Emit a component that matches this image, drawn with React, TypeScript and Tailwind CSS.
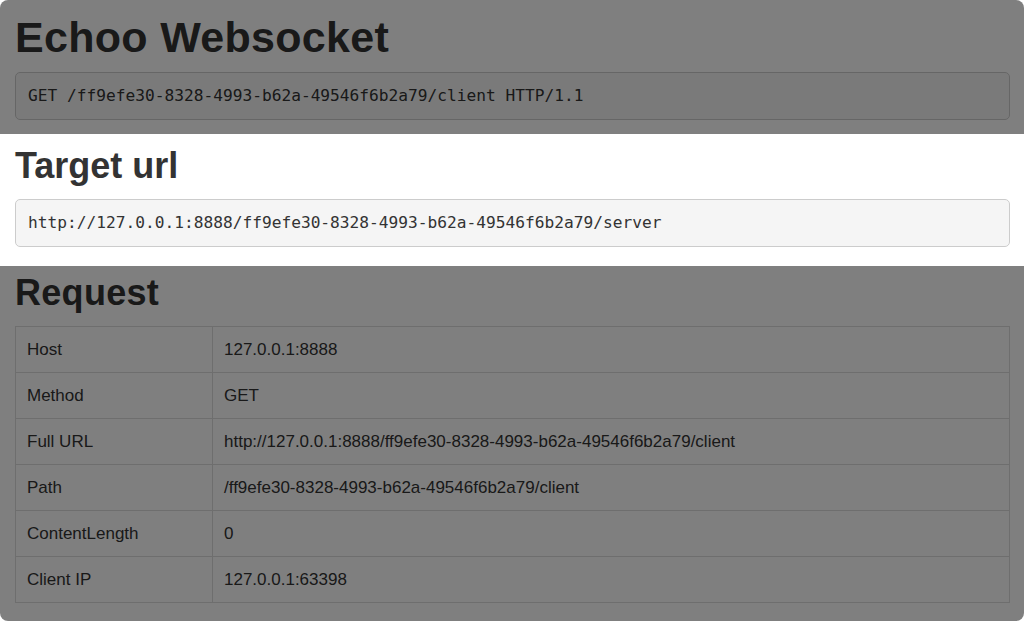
const requestRows: [string, string][] = [
  ['Host', '127.0.0.1:8888'],
  ['Method', 'GET'],
  ['Full URL', 'http://127.0.0.1:8888/ff9efe30-8328-4993-b62a-49546f6b2a79/client'],
  ['Path', '/ff9efe30-8328-4993-b62a-49546f6b2a79/client'],
  ['ContentLength', '0'],
  ['Client IP', '127.0.0.1:63398'],
]

const Pre = ({ children }: { children: string }) => (
  <pre className="h-[48px] rounded-[5px] border border-[#cccccc] bg-[#f5f5f5] px-[12px] font-['DejaVu_Sans_Mono',monospace] text-[16.2px] leading-[46px] text-[#333333]">
    {children}
  </pre>
)

// dims a block the way the screenshot tool greys out what isn't selected
const Dimmed = ({ children, className }: { children: React.ReactNode; className: string }) => (
  <section className={`relative ${className}`}>
    {children}
    <div className="absolute inset-0 bg-black/50" />
  </section>
)

export default function App() {
  return (
    <div className="h-[621px] w-[1024px] bg-white">
      <div className="h-full overflow-hidden rounded-[8px] bg-white font-['Liberation_Sans',Arial,sans-serif] text-[#333333]">
        <Dimmed className="h-[134px] pl-[15px] pr-[14px] pt-[14px]">
          <h1 className="text-[43px] font-bold leading-[47px] tracking-[0.3px]">Echoo Websocket</h1>
          <div className="mt-[11px]">
            <Pre>GET /ff9efe30-8328-4993-b62a-49546f6b2a79/client HTTP/1.1</Pre>
          </div>
        </Dimmed>

        <section className="h-[132px] pl-[15px] pr-[14px] pt-[12px]">
          <h2 className="text-[36px] font-bold leading-[40px]">Target url</h2>
          <div className="mt-[13px]">
            <Pre>http://127.0.0.1:8888/ff9efe30-8328-4993-b62a-49546f6b2a79/server</Pre>
          </div>
        </section>

        <Dimmed className="h-[355px] pl-[15px] pr-[14px] pt-[7px]">
          <h2 className="text-[36px] font-bold leading-[40px] tracking-[0.3px]">Request</h2>
          <table className="mt-[13px] w-full border-collapse text-[17px]">
            <tbody>
              {requestRows.map(([label, value]) => (
                <tr key={label} className="h-[46px]">
                  <td className="w-[197px] border border-[#dddddd] px-[11px]">{label}</td>
                  <td className="border border-[#dddddd] px-[11px]">{value}</td>
                </tr>
              ))}
            </tbody>
          </table>
        </Dimmed>
      </div>
    </div>
  )
}
